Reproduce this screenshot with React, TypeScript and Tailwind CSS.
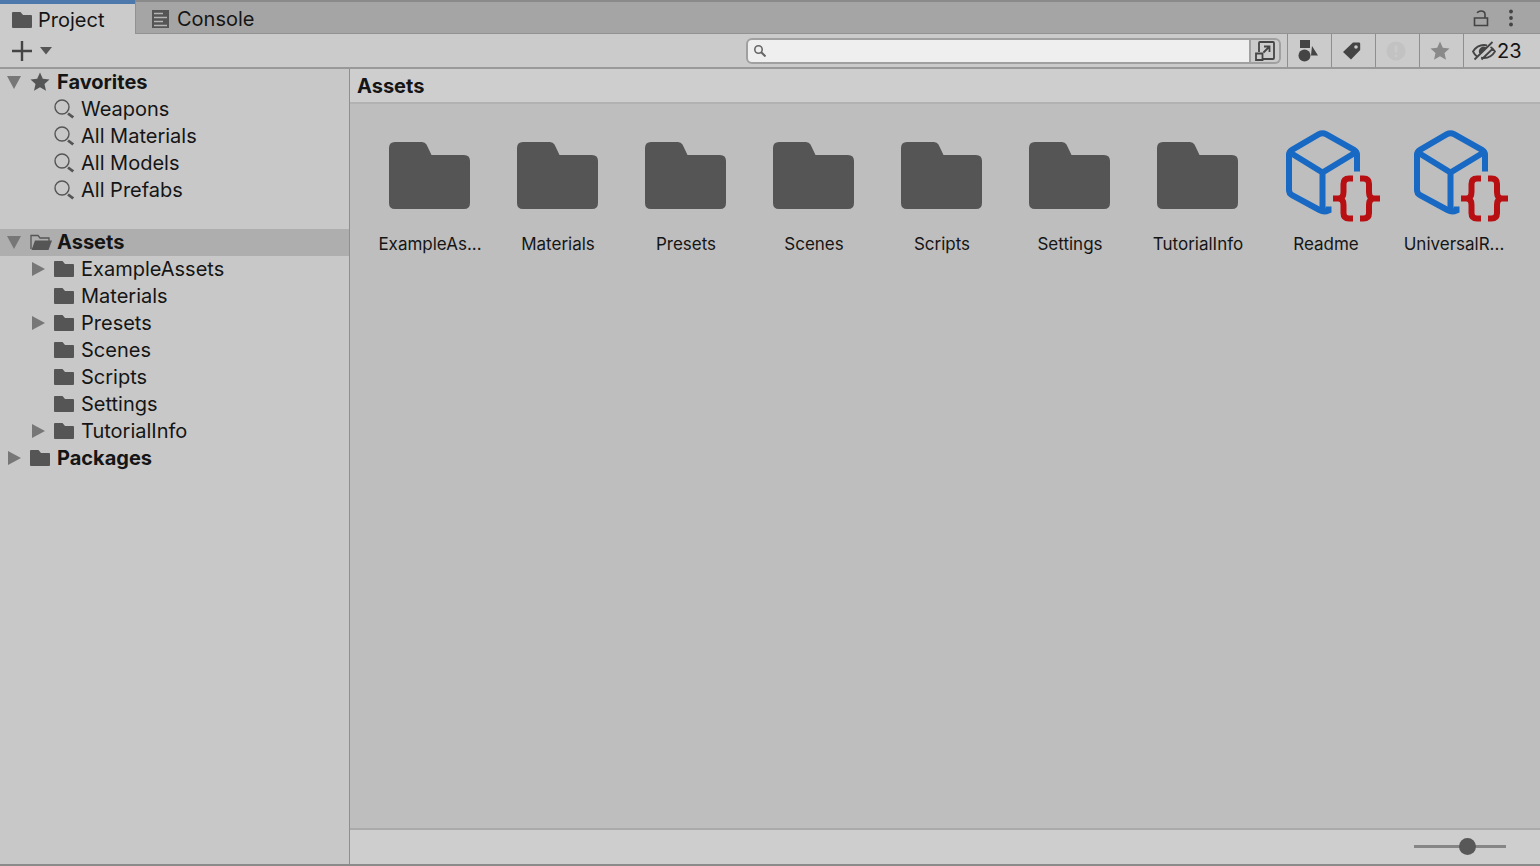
import React, { useState } from 'react';

interface TreeItem {
  name: string;
  icon: React.ElementType;
  level: number;
  arrow?: 'open' | 'closed';
  bold?: boolean;
}

interface AssetItem {
  name: string;
  icon: React.ElementType;
}

interface IconProps {
  className?: string;
}

const FolderIcon: React.FC<IconProps> = ({ className = 'w-5 h-4' }) => (
  <svg className={className} viewBox="0 0 20 16" fill="#555555" aria-hidden="true">
    <path d="M1 0h7.5l2.5 3h8q1 0 1 1v11q0 1-1 1H1q-1 0-1-1V1q0-1 1-1z" />
  </svg>
);

const OpenFolderIcon: React.FC<IconProps> = () => (
  <svg className="w-[22px] h-4" viewBox="0 0 22 16" aria-hidden="true">
    <path d="M1 15V1.5h7L10 4h9v3" fill="none" stroke="#555555" strokeWidth="1.3" />
    <path d="M5 6.5h17L18.5 16H1.5z" fill="#555555" />
  </svg>
);

const StarIcon: React.FC<IconProps> = ({ className = 'fill-[#555555]' }) => (
  <svg className={`w-5 h-5 ${className}`} viewBox="0 0 20 20" aria-hidden="true">
    <path d="M10 0.5l2.8 6.2 6.7.7-5 4.5 1.5 6.8L10 15.2 4 18.7l1.5-6.8-5-4.5 6.7-.7z" />
  </svg>
);

const SearchIcon: React.FC<IconProps> = () => (
  <svg className="w-5 h-5" viewBox="0 0 20 20" fill="none" stroke="#555555" aria-hidden="true">
    <circle cx="8" cy="8" r="7" strokeWidth="1.4" />
    <path d="M14 14.5l5.2 4" strokeWidth="2.8" />
  </svg>
);

const Arrow: React.FC<{ direction?: 'open' | 'closed' }> = ({ direction }) => (
  <svg className="w-4 h-4 shrink-0" viewBox="0 0 16 16" fill="#777777" aria-hidden="true">
    {direction === 'open' && <path d="M1 2h14L8 15z" />}
    {direction === 'closed' && <path d="M2 1l13 7-13 7z" />}
  </svg>
);

const BigFolder: React.FC = () => (
  <svg className="w-28 h-24" viewBox="0 0 112 96" fill="#555555" aria-hidden="true">
    <path d="M21 14h27q3 0 4.500 2.500L57.500 27H90q6 0 6 6V75q0 6-6 6H21q-6 0-6-6V20q0-6 6-6z" />
  </svg>
);

const ScriptableObject: React.FC = () => (
  <svg className="w-28 h-24" viewBox="0 0 112 96" fill="none" strokeWidth="6" aria-hidden="true">
    <g stroke="#1769c4">
      <path d="M87 43.5V27q0-3.5-3-5.2L56 6.2q-3.5-2-7 0L22 21.8q-3 1.7-3 5.2V62q0 3.5 3 5.2L49.500 82q4.500 2.500 9 .5v-4" />
      <path d="M20 24.5l32.5 20 33-20M52.5 44.5V82" />
    </g>
    <g stroke="#b80f12" strokeWidth="6">
      <path d="M83 50.500h-4q-5.500 0-5.500 5.500v8q0 6.500-5 6.500H63M68.500 70.500q5 0 5 6.500v8q0 5.500 5.500 5.500h4" />
      <path d="M90 50.500h3.500q5.500 0 5.500 5.500v8q0 6.500 5 6.500h6M104 70.500q-5 0-5 6.500v8q0 5.500-5.500 5.500H90" />
    </g>
  </svg>
);

const favorites: TreeItem[] = [
  { name: 'Favorites', icon: StarIcon, level: 0, arrow: 'open', bold: true },
  { name: 'Weapons', icon: SearchIcon, level: 1 },
  { name: 'All Materials', icon: SearchIcon, level: 1 },
  { name: 'All Models', icon: SearchIcon, level: 1 },
  { name: 'All Prefabs', icon: SearchIcon, level: 1 },
];

const folders: TreeItem[] = [
  { name: 'Assets', icon: OpenFolderIcon, level: 0, arrow: 'open', bold: true },
  { name: 'ExampleAssets', icon: FolderIcon, level: 1, arrow: 'closed' },
  { name: 'Materials', icon: FolderIcon, level: 1 },
  { name: 'Presets', icon: FolderIcon, level: 1, arrow: 'closed' },
  { name: 'Scenes', icon: FolderIcon, level: 1 },
  { name: 'Scripts', icon: FolderIcon, level: 1 },
  { name: 'Settings', icon: FolderIcon, level: 1 },
  { name: 'TutorialInfo', icon: FolderIcon, level: 1, arrow: 'closed' },
  { name: 'Packages', icon: FolderIcon, level: 0, arrow: 'closed', bold: true },
];

const assets: AssetItem[] = [
  { name: 'ExampleAs...', icon: BigFolder },
  { name: 'Materials', icon: BigFolder },
  { name: 'Presets', icon: BigFolder },
  { name: 'Scenes', icon: BigFolder },
  { name: 'Scripts', icon: BigFolder },
  { name: 'Settings', icon: BigFolder },
  { name: 'TutorialInfo', icon: BigFolder },
  { name: 'Readme', icon: ScriptableObject },
  { name: 'UniversalR...', icon: ScriptableObject },
];

interface TreeProps {
  items: TreeItem[];
  selected: string;
  onSelect: (name: string) => void;
}

const Tree: React.FC<TreeProps> = ({ items, selected, onSelect }) => (
  <ul>
    {items.map(({ name, icon: Icon, level, arrow, bold }) => (
      <li key={name}>
        <button
          onClick={() => onSelect(name)}
          className={`flex items-center w-full h-[27px] pb-px text-left ${level === 0 ? 'pl-[6px]' : 'pl-[30px]'} ${
            selected === name ? 'bg-[#aeaeae]' : ''
          } ${bold ? 'font-bold' : ''}`}
        >
          <Arrow direction={arrow} />
          <span className="flex items-center w-[27px] ml-2 shrink-0">
            <Icon />
          </span>
          <span>{name}</span>
        </button>
      </li>
    ))}
  </ul>
);

const TabBar: React.FC = () => (
  <header className="flex h-[34px] bg-[#a5a5a5] border-t-2 border-[#8a8a8a]">
    <button className="flex items-center gap-[6px] w-[135px] pl-3 pt-px bg-[#cbcbcb] border-t-4 border-[#4c78ab] -mt-[2px]">
      <FolderIcon />
      Project
    </button>
    <div className="flex flex-1 items-center justify-between border-b border-l border-[#929292] pl-4 pr-[27px]">
      <button className="flex items-center gap-2 pt-[3px]">
        <svg className="w-[17px] h-[18px]" viewBox="0 0 17 18" aria-hidden="true">
          <path d="M0 0h17v18H0z" fill="#555555" />
          <path d="M2 3.5h9M2 7.5h13M2 11.5h9M2 15.5h13" stroke="#b5b5b5" strokeWidth="1.5" />
        </svg>
        Console
      </button>
      <div className="flex items-center gap-5">
        <button aria-label="Lock">
          <svg className="w-4 h-[18px]" viewBox="0 0 16 18" fill="none" stroke="#444444" strokeWidth="1.6">
            <path d="M1.5 9h13v7.5h-13zM12 9V5.5Q12 2 8 2 5 2 4.2 4" />
          </svg>
        </button>
        <button aria-label="More options">
          <svg className="w-1 h-[18px]" viewBox="0 0 4 18" fill="#444444">
            <circle cx="2" cy="2.5" r="1.9" />
            <circle cx="2" cy="9" r="1.9" />
            <circle cx="2" cy="15.5" r="1.9" />
          </svg>
        </button>
      </div>
    </div>
  </header>
);

interface ToolButtonProps {
  label: string;
  children: React.ReactNode;
}

const ToolButton: React.FC<ToolButtonProps> = ({ label, children }) => (
  <button aria-label={label} className="flex items-center justify-center w-11 pr-[3px] border-l border-[#8f8f8f]">
    {children}
  </button>
);

const Toolbar: React.FC = () => {
  const [query, setQuery] = useState('');

  return (
    <div className="flex h-[35px] bg-[#cbcbcb] border-b-2 border-[#999999]">
      <button aria-label="Create" className="flex items-center gap-2 pl-3">
        <svg className="w-5 h-5" viewBox="0 0 20 20" stroke="#444444" strokeWidth="2.4">
          <path d="M10 0v20M0 10h20" />
        </svg>
        <svg className="w-3 h-2" viewBox="0 0 12 8" fill="#555555">
          <path d="M0 0h12L6 7.5z" />
        </svg>
      </button>
      <div className="flex flex-1 items-center justify-end pr-[6px]">
        <label className="flex items-center w-[505px] h-[26px] pl-[6px] rounded-l-md bg-[#efefef] border-2 border-[#a0a0a0]">
          <svg className="w-3 h-3" viewBox="0 0 12 12" fill="none" stroke="#666666" aria-hidden="true">
            <circle cx="4.5" cy="4.5" r="3.7" strokeWidth="1.6" />
            <path d="M7 7l4.5 4.5" strokeWidth="2" />
          </svg>
          <input
            type="text"
            aria-label="Search assets"
            value={query}
            onChange={(e) => setQuery(e.target.value)}
            className="flex-1 min-w-0 pl-2 text-base bg-transparent outline-none"
          />
        </label>
        <button
          aria-label="Open in search window"
          className="flex items-center justify-center w-[30px] h-[26px] rounded-r-md border-2 border-l-0 border-[#a0a0a0]"
        >
          <svg className="w-5 h-5" viewBox="0 0 20 20" fill="none" stroke="#444444" strokeWidth="1.8">
            <path d="M4 11V2q0-1 1-1h13q1 0 1 1v15q0 1-1 1H8M1 12.5h6.500v6.500H1zM8.500 11.500l6-6M9 5.500h5.500V11" />
          </svg>
        </button>
      </div>
      <ToolButton label="Filter by type">
        <svg className="w-5 h-[22px]" viewBox="0 0 20 22" fill="#444444">
          <path d="M2 0h10v8H2zM14 6l6 9.5h-7z" />
          <circle cx="6.5" cy="15.5" r="6" />
        </svg>
      </ToolButton>
      <ToolButton label="Filter by label">
        <svg className="w-[18px] h-[18px]" viewBox="0 0 18 18" fill="#444444">
          <path fillRule="evenodd" d="M10 .5H16q1.200 0 1.200 1.200V8L8 17.500 0 10zM13 3.200a1.800 1.800 0 100 3.600 1.800 1.800 0 000-3.600z" />
        </svg>
      </ToolButton>
      <ToolButton label="Filter by import log">
        <svg className="w-5 h-5" viewBox="0 0 20 20">
          <circle cx="10" cy="10" r="9.5" fill="#c2c2c2" />
          <path d="M10 4.5v7M10 13.5v2.5" stroke="#c9c9c9" strokeWidth="2.5" />
        </svg>
      </ToolButton>
      <ToolButton label="Save search">
        <StarIcon className="fill-[#898989]" />
      </ToolButton>
      <button
        aria-label="Hidden packages: 23"
        className="flex items-center gap-px w-[77px] pl-2 border-l border-[#8f8f8f]"
      >
        <svg className="w-6 h-5" viewBox="0 0 24 20" fill="none" stroke="#444444" strokeWidth="1.8">
          <path d="M5 15.5Q2.5 13.5 1 10.5 5 4 12 4q1.5 0 3 .4M18.5 6q3 1.8 4.5 4.5Q19 17 12 17q-1.500 0-3-.4M2.5 18.5L20.5 1M9.5 18.5L21 7.5" />
          <path d="M7 12q-1-5 4-6.5l3.5.5-6 7z" fill="#444444" stroke="none" />
        </svg>
        23
      </button>
    </div>
  );
};

const App: React.FC = () => {
  const [selected, setSelected] = useState('Assets');
  const [zoom, setZoom] = useState(60);

  return (
    <div className="flex flex-col min-h-screen bg-[#c8c8c8] border-b-2 border-[#8a8a8a] font-['Inter',sans-serif] text-[20px] leading-6 text-[#151515]">
      <TabBar />
      <Toolbar />
      <div className="flex flex-1">
        <nav className="flex flex-col gap-[25px] w-[350px] shrink-0 border-r border-[#8f8f8f]">
          <Tree items={favorites} selected={selected} onSelect={setSelected} />
          <Tree items={folders} selected={selected} onSelect={setSelected} />
        </nav>
        <main className="flex flex-col flex-1 min-w-0 bg-[#bebebe]">
          <h1 className="flex items-center h-[35px] pl-[7px] bg-[#cecece] border-b-2 border-[#b2b2b2] font-bold">
            Assets
          </h1>
          <ul className="grid grid-cols-[repeat(auto-fill,128px)] flex-1 content-start pl-4 pt-6">
            {assets.map(({ name, icon: Icon }) => (
              <li key={name}>
                <button className="flex flex-col items-center gap-2 w-full">
                  <Icon />
                  <span className="text-[17px]">{name}</span>
                </button>
              </li>
            ))}
          </ul>
          <footer className="flex items-center justify-end h-9 pr-[34px] pb-px bg-[#cecece] border-t-2 border-[#aaaaaa]">
            <input
              type="range"
              aria-label="Icon size"
              value={zoom}
              onChange={(e) => setZoom(Number(e.target.value))}
              className="w-[92px] h-[17px] appearance-none bg-transparent [&::-webkit-slider-runnable-track]:h-[3px] [&::-webkit-slider-runnable-track]:bg-[#868686] [&::-webkit-slider-thumb]:appearance-none [&::-webkit-slider-thumb]:w-[17px] [&::-webkit-slider-thumb]:h-[17px] [&::-webkit-slider-thumb]:-mt-[7px] [&::-webkit-slider-thumb]:rounded-full [&::-webkit-slider-thumb]:bg-[#585858]"
            />
          </footer>
        </main>
      </div>
    </div>
  );
};

export default App;
